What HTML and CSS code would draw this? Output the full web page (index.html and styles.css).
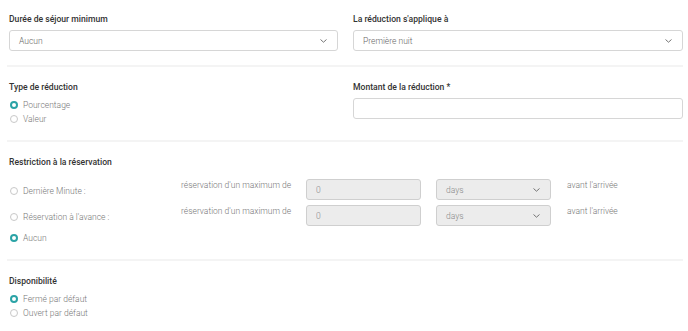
FILE: index.html
```html
<!DOCTYPE html>
<html lang="fr">
<head>
    <meta charset="UTF-8">
    <meta name="viewport" content="width=device-width, initial-scale=1.0">
    <title>Réduction</title>
    <link rel="stylesheet" href="styles.css">
</head>
<body>
    <div class="form">
        <div class="section two-cols">
            <div class="field">
                <label class="field-label">Durée de séjour minimum</label>
                <div class="select">
                    <span>Aucun</span>
                    <svg class="chevron" width="7" height="4" viewBox="0 0 7 4"><path d="M0.5 0.5 L3.5 3.2 L6.5 0.5" fill="none" stroke="#666" stroke-width="0.9"/></svg>
                </div>
            </div>
            <div class="field">
                <label class="field-label">La réduction s'applique à</label>
                <div class="select">
                    <span>Première nuit</span>
                    <svg class="chevron" width="7" height="4" viewBox="0 0 7 4"><path d="M0.5 0.5 L3.5 3.2 L6.5 0.5" fill="none" stroke="#666" stroke-width="0.9"/></svg>
                </div>
            </div>
        </div>

        <div class="section two-cols">
            <div class="field">
                <label class="field-label">Type de réduction</label>
                <label class="radio"><input type="radio" name="type" checked> Pourcentage</label>
                <label class="radio"><input type="radio" name="type"> Valeur</label>
            </div>
            <div class="field">
                <label class="field-label">Montant de la réduction *</label>
                <input class="text-input" type="text">
            </div>
        </div>

        <div class="section">
            <label class="field-label">Restriction à la réservation</label>
            <div class="restrictions">
                <div class="restriction-row">
                    <label class="radio radio-col"><input type="radio" name="restr"> Dernière Minute :</label>
                    <span class="hint">réservation d'un maximum de</span>
                    <input class="text-input small disabled" type="text" value="0" disabled>
                    <div class="select small disabled">
                        <span>days</span>
                        <svg class="chevron" width="7" height="4" viewBox="0 0 7 4"><path d="M0.5 0.5 L3.5 3.2 L6.5 0.5" fill="none" stroke="#666" stroke-width="0.9"/></svg>
                    </div>
                    <span class="hint after">avant l'arrivée</span>
                </div>
                <div class="restriction-row">
                    <label class="radio radio-col"><input type="radio" name="restr"> Réservation à l'avance :</label>
                    <span class="hint">réservation d'un maximum de</span>
                    <input class="text-input small disabled" type="text" value="0" disabled>
                    <div class="select small disabled">
                        <span>days</span>
                        <svg class="chevron" width="7" height="4" viewBox="0 0 7 4"><path d="M0.5 0.5 L3.5 3.2 L6.5 0.5" fill="none" stroke="#666" stroke-width="0.9"/></svg>
                    </div>
                    <span class="hint after">avant l'arrivée</span>
                </div>
                <label class="radio"><input type="radio" name="restr" checked> Aucun</label>
            </div>
        </div>

        <div class="section last">
            <label class="field-label">Disponibilité</label>
            <label class="radio"><input type="radio" name="dispo" checked> Fermé par défaut</label>
            <label class="radio"><input type="radio" name="dispo"> Ouvert par défaut</label>
        </div>
    </div>
</body>
</html>
```

FILE: styles.css
```css
body {
    font-family: Roboto, "Liberation Sans", Arial, sans-serif;
    margin: 0;
    background-color: #fff;
    color: #777;
    font-size: 8.5px;
    font-weight: 300;
}

.form {
    padding: 0 5px 0 9px;
}

.section {
    padding: 14px 0 14px;
    border-bottom: 2px solid #f4f4f4;
    margin-left: -2px;
    padding-left: 2px;
}

.section + .section {
    padding-top: 15px;
}

.section.last {
    border-bottom: none;
}

.two-cols {
    display: grid;
    grid-template-columns: 329px 1fr;
    column-gap: 15px;
}

.field {
    display: flex;
    flex-direction: column;
}

.field-label {
    display: block;
    font-size: 8.6px;
    font-weight: 500;
    line-height: 11px;
    margin-bottom: 5px;
    color: #333;
}

.select {
    height: 21px;
    box-sizing: border-box;
    border: 1px solid #d6d6d6;
    border-radius: 3px;
    display: flex;
    align-items: center;
    justify-content: space-between;
    padding: 0 10px 0 9px;
    color: #666;
    background: #fff;
}

.text-input {
    height: 21px;
    box-sizing: border-box;
    border: 1px solid #d6d6d6;
    border-radius: 3px;
    padding: 0 9px;
    font: inherit;
    color: #888;
    background: #fff;
    margin: 0;
}

.small {
    width: 115px;
    flex: none;
}

.disabled {
    background-color: #ececec;
    border-color: #cfcfcf;
    color: #888;
}

.radio {
    display: flex;
    align-items: center;
    gap: 5px;
    height: 14px;
    color: #777;
}

.radio input {
    appearance: none;
    -webkit-appearance: none;
    width: 8px;
    height: 8px;
    margin: 0 0 0 1px;
    border: 1px solid #c8c8c8;
    border-radius: 50%;
    box-sizing: border-box;
    background: #fff;
}

.radio input:checked {
    border: 2.5px solid #2ba3a6;
}

.restrictions {
    display: flex;
    flex-direction: column;
    gap: 5px;
    margin-top: 11px;
}

.restriction-row {
    display: flex;
    align-items: center;
    height: 21px;
}

.radio-col {
    width: 172px;
    flex: none;
    padding-top: 2px;
}

.hint {
    color: #777;
    width: 125px;
    flex: none;
    align-self: flex-start;
    padding-top: 1px;
}

.restriction-row .select {
    margin-left: 15px;
}

.hint.after {
    width: auto;
    margin-left: 16px;
}
```
